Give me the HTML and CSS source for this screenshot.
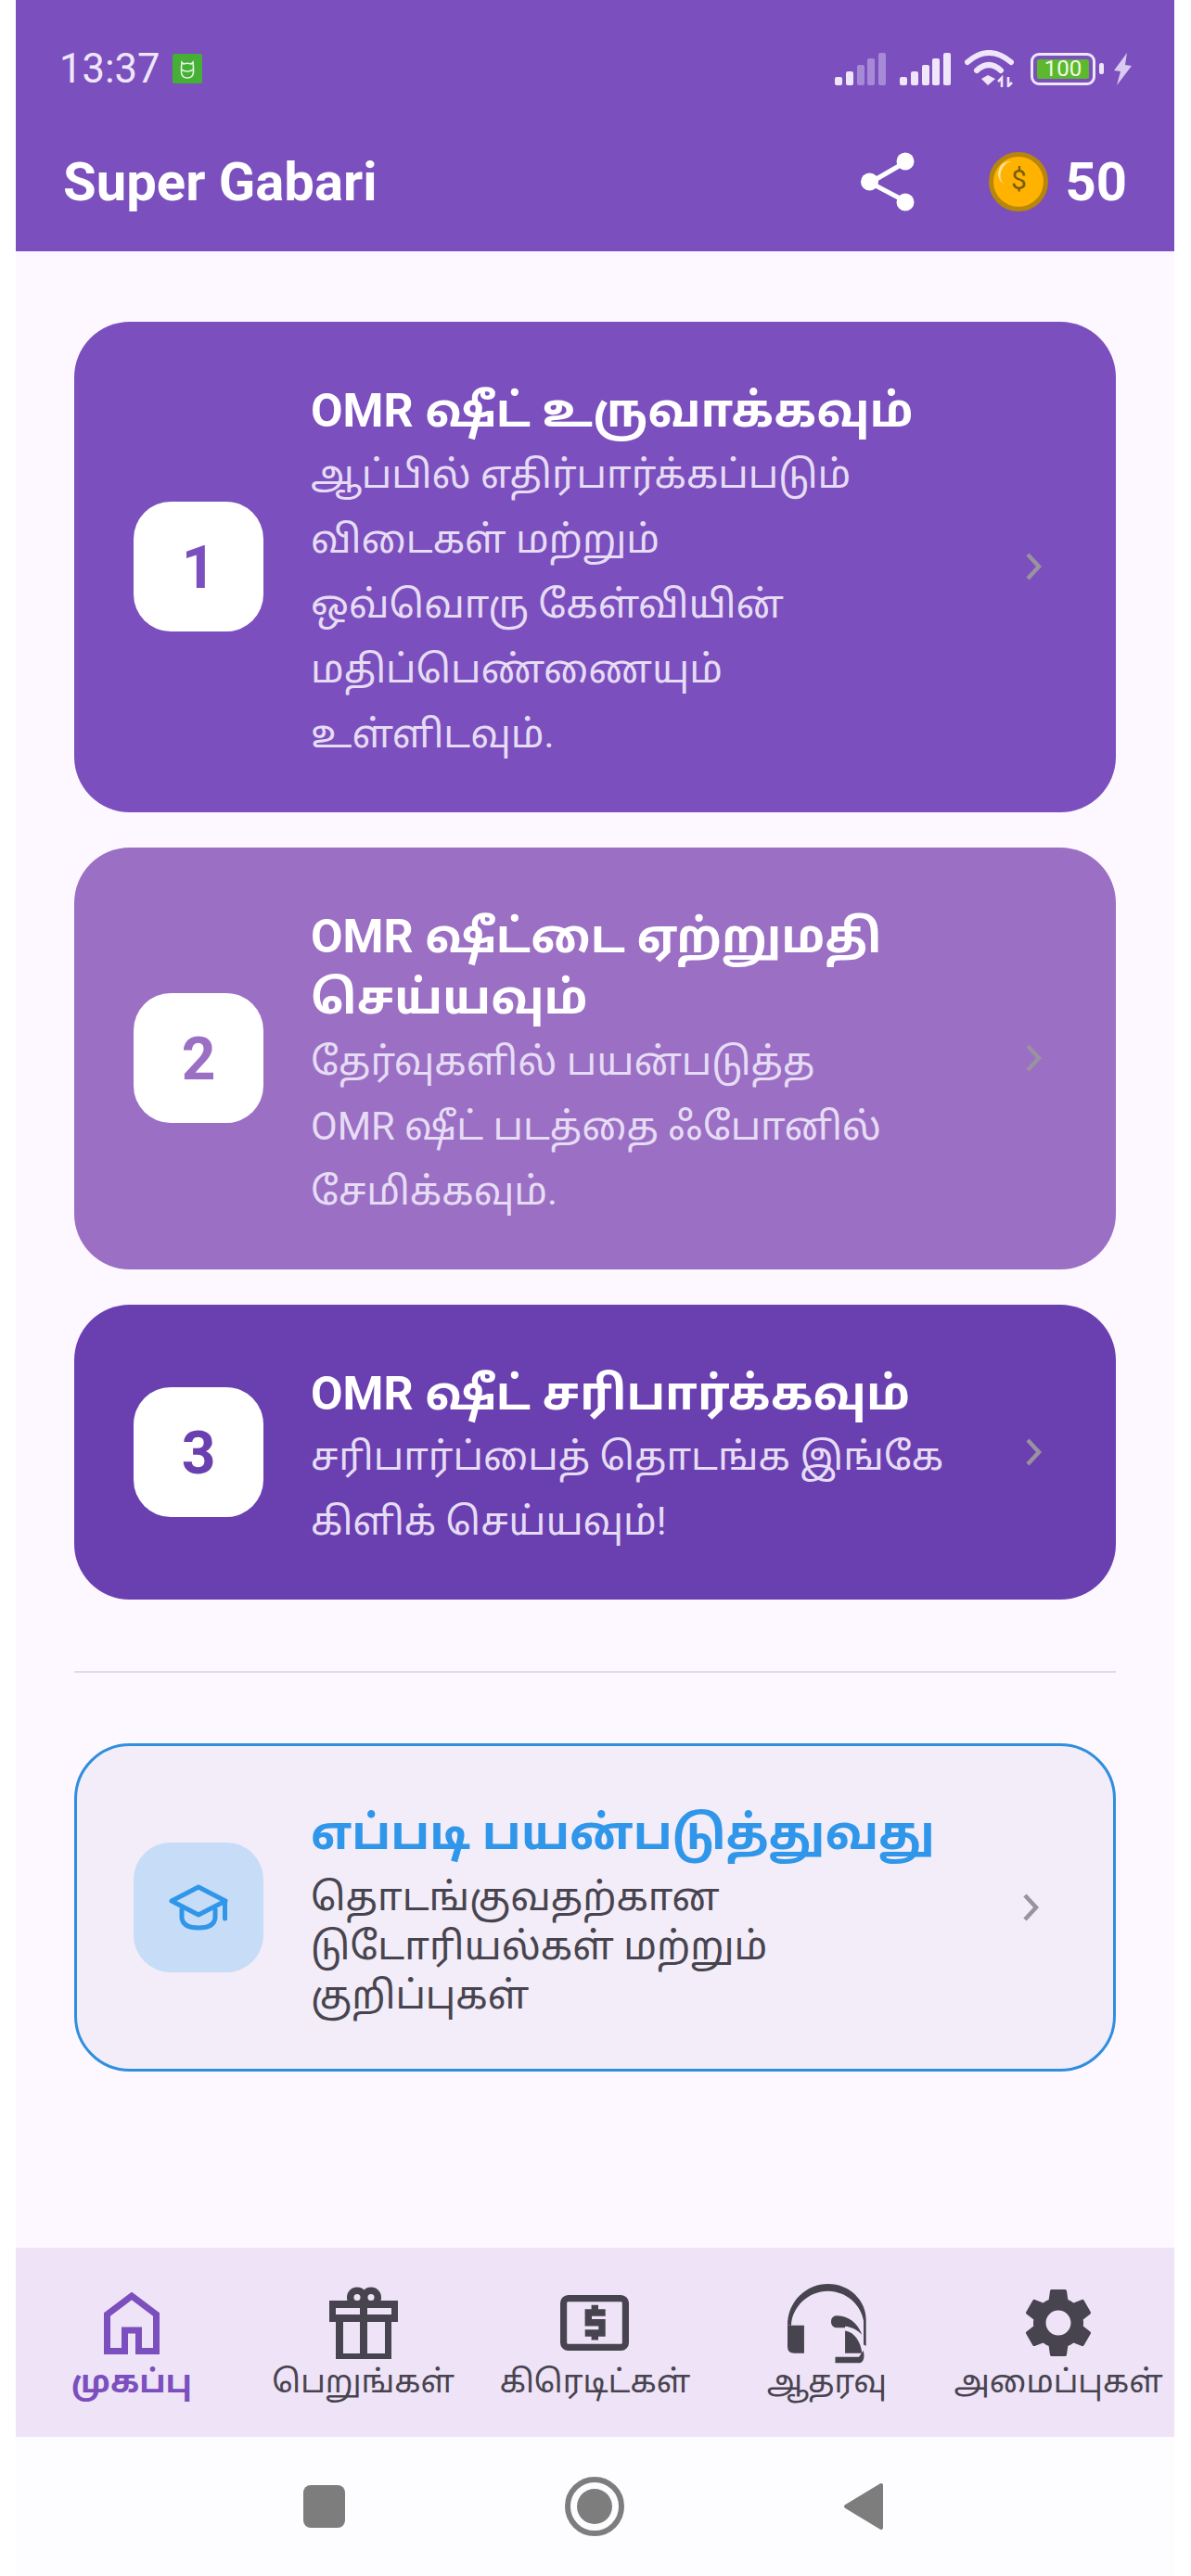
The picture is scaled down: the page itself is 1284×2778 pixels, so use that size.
FILE: index.html
```html
<!DOCTYPE html>
<html lang="ta">
<head>
  <meta charset="UTF-8">
  <meta name="viewport" content="width=device-width, initial-scale=1.0">
  <title>Super Gabari</title>
  <link rel="stylesheet" href="styles.css">
</head>
<body>
  <div class="phone">
    <div class="header">
      <div class="status-bar">
        <div class="status-left">
          <span class="clock">13:37</span>
          <svg class="notif-icon" viewBox="0 0 32 32">
            <rect width="32" height="32" rx="2" fill="#45b035"/>
            <path d="M10 9 L12 11 Q16 9.5 20 11 L22 9 L22.5 15 V20 Q22 26 16 26 Q10 26 9.5 20 V15 Z M9.5 17 Q16 21 22.5 17" fill="none" stroke="#e6f5e0" stroke-width="1.6"/>
          </svg>
        </div>
        <div class="status-right">
          <svg class="signal" viewBox="0 0 55 35">
            <rect x="0" y="26" width="8" height="9" rx="2" fill="#efe6fa"/>
            <rect x="12" y="20" width="8" height="15" rx="2" fill="#efe6fa"/>
            <rect x="24" y="13" width="8" height="22" rx="2" fill="#a78ad6"/>
            <rect x="35" y="6" width="8" height="29" rx="2" fill="#a78ad6"/>
            <rect x="47" y="0" width="8" height="35" rx="2" fill="#a78ad6"/>
          </svg>
          <svg class="signal" viewBox="0 0 55 35">
            <rect x="0" y="26" width="8" height="9" rx="2" fill="#efe6fa"/>
            <rect x="12" y="20" width="8" height="15" rx="2" fill="#efe6fa"/>
            <rect x="24" y="13" width="8" height="22" rx="2" fill="#efe6fa"/>
            <rect x="35" y="6" width="8" height="29" rx="2" fill="#efe6fa"/>
            <rect x="47" y="0" width="8" height="35" rx="2" fill="#efe6fa"/>
          </svg>
          <svg class="wifi" viewBox="0 0 53 40">
            <path d="M3 13 Q26 -7 50 13" fill="none" stroke="#efe6fa" stroke-width="6" stroke-linecap="round"/>
            <path d="M13 22 Q26 10 39 22" fill="none" stroke="#efe6fa" stroke-width="6" stroke-linecap="round"/>
            <path d="M18 31 L25 27 L33 31 L25 38 Z" fill="#efe6fa"/>
            <path d="M40 40 V30 L36 34 M47 29 V39 L51 35" fill="none" stroke="#efe6fa" stroke-width="2.6"/>
          </svg>
          <div class="battery">
            <div class="battery-body"><span class="battery-level">100</span></div>
            <div class="battery-cap"></div>
          </div>
          <svg class="bolt" viewBox="0 0 21 35">
            <path d="M15 0 L1 19 L8 20 L4 35 L20 14 L13 13 Z" fill="#d9cbf0"/>
          </svg>
        </div>
      </div>
      <div class="app-bar">
        <div class="app-title">Super Gabari</div>
        <svg class="share-icon" viewBox="0 0 58 64">
          <path d="M48 11 L10 33 L48 53" fill="none" stroke="#fff" stroke-width="5"/>
          <circle cx="48" cy="10" r="9.5" fill="#fff"/>
          <circle cx="9.5" cy="32" r="9.5" fill="#fff"/>
          <circle cx="48" cy="54" r="9.5" fill="#fff"/>
        </svg>
        <div class="coins">
          <div class="coin">$</div>
          <span class="coin-count">50</span>
        </div>
      </div>
    </div>

    <div class="main">
      <div class="cards">
        <div class="card card-one">
          <div class="badge">1</div>
          <div class="card-text">
            <div class="card-title">OMR ஷீட் உருவாக்கவும்</div>
            <div class="card-desc">ஆப்பில் எதிர்பார்க்கப்படும்<br>விடைகள் மற்றும்<br>ஒவ்வொரு கேள்வியின்<br>மதிப்பெண்ணையும்<br>உள்ளிடவும்.</div>
          </div>
          <svg class="chevron" viewBox="0 0 20 32"><path d="M4 3 L16 16 L4 29" fill="none" stroke-width="4.5"/></svg>
        </div>
        <div class="card card-two">
          <div class="badge">2</div>
          <div class="card-text">
            <div class="card-title">OMR ஷீட்டை ஏற்றுமதி<br>செய்யவும்</div>
            <div class="card-desc">தேர்வுகளில் பயன்படுத்த<br>OMR ஷீட் படத்தை ஃபோனில்<br>சேமிக்கவும்.</div>
          </div>
          <svg class="chevron" viewBox="0 0 20 32"><path d="M4 3 L16 16 L4 29" fill="none" stroke-width="4.5"/></svg>
        </div>
        <div class="card card-three">
          <div class="badge">3</div>
          <div class="card-text">
            <div class="card-title">OMR ஷீட் சரிபார்க்கவும்</div>
            <div class="card-desc">சரிபார்ப்பைத் தொடங்க இங்கே<br>கிளிக் செய்யவும்!</div>
          </div>
          <svg class="chevron" viewBox="0 0 20 32"><path d="M4 3 L16 16 L4 29" fill="none" stroke-width="4.5"/></svg>
        </div>
      </div>

      <div class="divider"></div>

      <div class="help-card">
        <div class="help-badge">
          <svg class="cap-icon" viewBox="0 0 64 50">
            <path d="M32 3 L61 18 L32 33 L3 18 Z" fill="none" stroke="#2f96ea" stroke-width="5" stroke-linejoin="round"/>
            <path d="M14 26 V36 Q15 47 32 47 Q49 47 50 36 V26" fill="none" stroke="#2f96ea" stroke-width="5"/>
            <path d="M60.5 18 V37" fill="none" stroke="#2f96ea" stroke-width="5" stroke-linecap="round"/>
          </svg>
        </div>
        <div class="help-text">
          <div class="card-title help-title">எப்படி பயன்படுத்துவது</div>
          <div class="help-desc">தொடங்குவதற்கான<br>டுடோரியல்கள் மற்றும்<br>குறிப்புகள்</div>
        </div>
        <svg class="chevron" viewBox="0 0 20 32"><path d="M4 3 L16 16 L4 29" fill="none" stroke-width="4.5"/></svg>
      </div>
    </div>

    <div class="bottom-nav">
      <div class="nav-item active">
        <div class="nav-icon">
          <svg class="icon-home" viewBox="0 0 60 67">
            <path d="M3.5 63.5 V24 L30 4 L56.5 24 V63.5 H37.5 V41 H22.5 V63.5 Z" fill="none" stroke="#7b4fbd" stroke-width="7"/>
          </svg>
        </div>
        <span class="nav-label">முகப்பு</span>
      </div>
      <div class="nav-item">
        <div class="nav-icon">
          <svg class="icon-gift" viewBox="0 0 74 78">
            <circle cx="30" cy="11.5" r="7.3" fill="none" stroke="#48444f" stroke-width="7.5"/>
            <circle cx="45" cy="11.5" r="7.3" fill="none" stroke="#48444f" stroke-width="7.5"/>
            <path fill-rule="evenodd" fill="#48444f" d="M0 15 H74 V38 H67 V78 H7 V38 H0 Z M7 23 H33 V30 H7 Z M41 23 H67 V30 H41 Z M15 38 H33 V72 H15 Z M41 38 H60 V72 H41 Z"/>
          </svg>
        </div>
        <span class="nav-label">பெறுங்கள்</span>
      </div>
      <div class="nav-item">
        <div class="nav-icon">
          <svg class="icon-credit" viewBox="0 0 74 60">
            <rect x="3.6" y="3.6" width="66.8" height="52.8" rx="5" fill="none" stroke="#48444f" stroke-width="7.2"/>
            <path d="M48.7 19 H30.3 V29.7 H45 V41 H26.7" fill="none" stroke="#48444f" stroke-width="7.4"/>
            <path d="M37.3 10.7 V16 M37.3 44 V48.5" fill="none" stroke="#48444f" stroke-width="7.4"/>
          </svg>
        </div>
        <span class="nav-label">கிரெடிட்கள்</span>
      </div>
      <div class="nav-item">
        <div class="nav-icon">
          <svg class="icon-headset" viewBox="45 12 262 262">
            <path fill="#48444f" d="M48 150 C48 70 110 15 180 15 C250 15 303 70 303 130 V217 L295 212 V135 C285 80 240 40 180 38 C115 38 62 90 60 150 Z"/>
            <path fill="#48444f" d="M48 150 H102 V240 H70 Q48 240 48 218 Z"/>
            <path fill="#48444f" d="M205 118 C245 118 275 140 290 180 C275 165 255 155 235 153 V157 H205 A20 20 0 0 1 205 118 Z"/>
            <path fill="#48444f" d="M235 167 C265 172 285 200 290 240 H235 Z"/>
            <path fill="#48444f" d="M203 252 H280 L294 232 C300 250 295 272 280 272 H203 Z"/>
          </svg>
        </div>
        <span class="nav-label">ஆதரவு</span>
      </div>
      <div class="nav-item">
        <div class="nav-icon">
          <svg class="icon-gear" viewBox="0 0 24 24">
            <path d="M19.14 12.94c.04-.3.06-.61.06-.94 0-.32-.02-.64-.07-.94l2.03-1.58a.49.49 0 0 0 .12-.61l-1.92-3.32a.488.488 0 0 0-.59-.22l-2.39.96c-.5-.38-1.03-.7-1.62-.94l-.36-2.54a.484.484 0 0 0-.48-.41h-3.84c-.24 0-.43.17-.47.41l-.36 2.54c-.59.24-1.13.57-1.62.94l-2.39-.96c-.22-.08-.47 0-.59.22L2.74 8.87c-.12.21-.08.47.12.61l2.03 1.58c-.05.3-.09.63-.09.94s.02.64.07.94l-2.03 1.58a.49.49 0 0 0-.12.61l1.92 3.32c.12.22.37.29.59.22l2.39-.96c.5.38 1.03.7 1.62.94l.36 2.54c.05.24.24.41.48.41h3.84c.24 0 .44-.17.47-.41l.36-2.54c.59-.24 1.13-.56 1.62-.94l2.39.96c.22.08.47 0 .59-.22l1.92-3.32c.12-.22.07-.47-.12-.61l-2.01-1.58zM12 15.6c-1.98 0-3.6-1.62-3.6-3.6s1.62-3.6 3.6-3.6 3.6 1.62 3.6 3.6-1.62 3.6-3.6 3.6z" fill="#48444f"/>
          </svg>
        </div>
        <span class="nav-label">அமைப்புகள்</span>
      </div>
    </div>

    <div class="system-nav">
      <div class="sys-square"></div>
      <div class="sys-circle"><div class="sys-dot"></div></div>
      <svg class="sys-back" viewBox="0 0 44 52">
        <path d="M41 3 V49 L3 26 Z" fill="#7d7d7d" stroke="#7d7d7d" stroke-width="4" stroke-linejoin="round"/>
      </svg>
    </div>
  </div>
</body>
</html>
```

FILE: styles.css
```css
* { box-sizing: border-box; }
html, body { height: 100%; }
body { margin: 0; background: #fff; font-family: Roboto, "Noto Sans", "Noto Sans Tamil", sans-serif; }
.phone { width: 1249px; height: 2778px; margin-left: 17px; display: flex; flex-direction: column; background: #fdf7ff; }

/* header */
.header { height: 271px; background: #7b4fbd; flex-shrink: 0; }
.status-bar { height: 148px; padding: 0 45px 0 47px; display: flex; align-items: center; justify-content: space-between; }
.status-left { display: flex; align-items: center; gap: 14px; }
.clock { font-size: 43.5px; color: #efe6fa; }
.notif-icon { width: 32px; height: 32px; }
.status-right { display: flex; align-items: center; }
.signal { width: 55px; height: 35px; margin-right: 15px; }
.wifi { width: 53px; height: 40px; margin-right: 18px; }
.battery { display: flex; align-items: center; gap: 4px; margin-right: 10px; }
.battery-body { width: 70px; height: 35px; border: 3px solid #efe6fa; border-radius: 9px; padding: 4px; display: flex; }
.battery-level { flex: 1; background: #5cb82c; border-radius: 2px; color: #f2fbe8; font-size: 24px; line-height: 21px; text-align: center; }
.battery-cap { width: 5px; height: 12px; background: #efe6fa; border-radius: 2px; }
.bolt { width: 21px; height: 35px; }
.app-bar { height: 123px; padding: 0 51px 28px 51px; display: flex; align-items: center; }
.app-title { flex: 1; font-size: 58px; font-weight: 700; color: #fff; }
.share-icon { width: 58px; height: 64px; margin-right: 80px; }
.coins { display: flex; align-items: center; gap: 18px; }
.coin { position: relative; width: 64px; height: 64px; border-radius: 50%; background: #ffb300; border: 5px solid #b8860b; color: #7a5c10; font-size: 30px; text-align: center; line-height: 50px; }
.coin::before { content: ""; position: absolute; left: 5px; top: 5px; width: 22px; height: 26px; border-left: 3px solid rgba(255, 255, 255, 0.6); border-radius: 50%; transform: rotate(20deg); }
.coin-count { font-size: 58px; font-weight: 700; color: #fff; }

/* main */
.main { flex: 1; padding: 76px 63px 0; }
.cards { display: flex; flex-direction: column; gap: 38px; }
.card { display: flex; align-items: center; padding: 56px 63px 56px 64px; border-radius: 60px; color: #fff; }
.card-one { background: #7b4fbd; }
.card-two { background: #9b6fc4; }
.card-three { background: #6a3fb0; }
.badge { width: 140px; height: 140px; flex-shrink: 0; border-radius: 40px; background: #fff; padding-top: 3px; display: flex; align-items: center; justify-content: center; font-size: 64px; font-weight: 700; }
.card-one .badge { color: #7b4fbd; }
.card-two .badge { color: #9b6fc4; }
.card-three .badge { color: #6a3fb0; }
.card-text { flex: 1; margin: 0 0 -7px 51px; padding-top: 7px; }
.card-title { font-size: 50.2px; font-weight: 700; line-height: 66.5px; }
.card-desc { font-size: 41.7px; line-height: 70px; color: #e6dcf5; }
.chevron { width: 20px; height: 32px; stroke: #99929f; flex-shrink: 0; margin-right: 16px; }
.divider { height: 2px; background: #e0dbe4; margin: 77px 0 76px; }
.help-card { display: flex; align-items: center; padding: 61px 63px 61px 61px; border: 3px solid #2f8fdf; border-radius: 60px; background: #f2edf8; }
.help-badge { width: 140px; height: 140px; flex-shrink: 0; border-radius: 40px; background: #c7dcf6; display: flex; align-items: center; justify-content: center; }
.cap-icon { width: 64px; height: 50px; }
.help-text { flex: 1; margin-left: 51px; }
.help-title { color: #2f96ea; font-size: 50.5px; }
.help-desc { font-size: 41.7px; line-height: 53px; color: #48444f; margin: 8px 0 -8px; }

/* bottom nav */
.bottom-nav { height: 204px; flex-shrink: 0; background: #eee3f7; display: grid; grid-template-columns: repeat(5, 1fr); }
.nav-item { display: flex; flex-direction: column; align-items: center; padding-top: 41px; }
.nav-icon { height: 80px; display: flex; align-items: center; justify-content: center; }
.icon-home { width: 60px; height: 67px; }
.icon-gift { width: 74px; height: 78px; }
.icon-credit { width: 74px; height: 60px; }
.icon-headset { width: 87px; height: 87px; }
.icon-gear { width: 90px; height: 90px; }
.nav-label { font-size: 34.2px; line-height: 46px; white-space: nowrap; color: #48444f; }
.active .nav-label { color: #7b4fbd; font-weight: 700; }

/* system nav */
.system-nav { height: 150px; flex-shrink: 0; background: #fdfcff; padding: 0 313px 0 310px; display: flex; align-items: center; justify-content: space-between; }
.sys-square { width: 45px; height: 46px; border-radius: 8px; background: #7d7d7d; }
.sys-circle { width: 64px; height: 64px; border-radius: 50%; border: 6px solid #7d7d7d; display: flex; align-items: center; justify-content: center; }
.sys-dot { width: 38px; height: 38px; border-radius: 50%; background: #7d7d7d; }
.sys-back { width: 44px; height: 52px; }
```
